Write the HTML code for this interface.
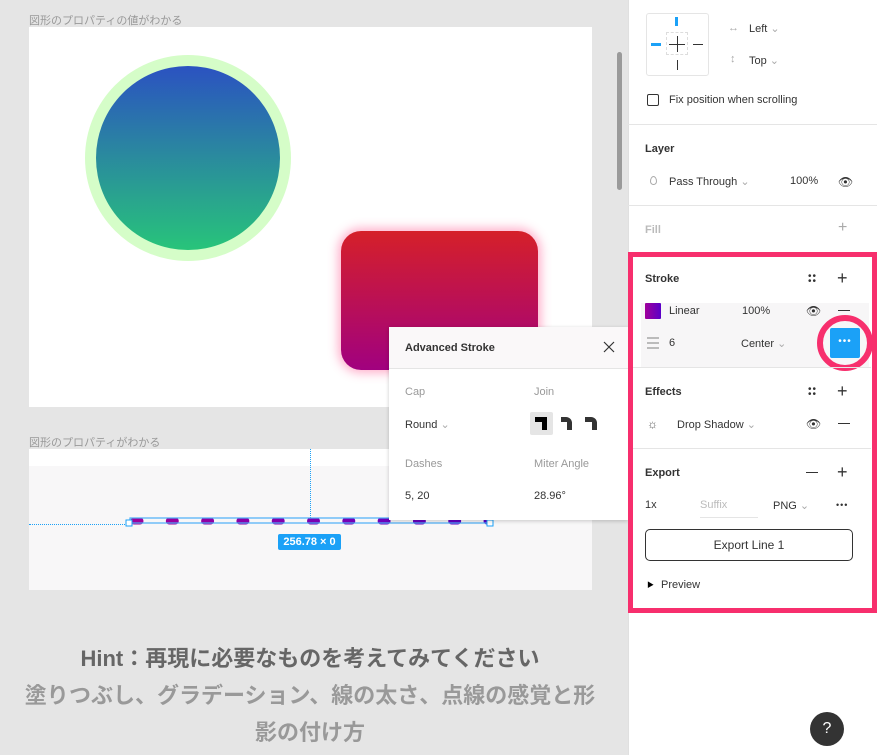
<!DOCTYPE html>
<html><head><meta charset="utf-8"><style>
*{margin:0;padding:0;box-sizing:border-box}
body{width:877px;height:755px;background:#e5e5e5;position:relative;overflow:hidden;font-family:"Liberation Sans","Noto Sans CJK JP",sans-serif;}
.a{position:absolute}
.lbl{font-size:11px;color:#999}
.t{font-size:11px;color:#333}
.h{font-size:11px;font-weight:bold;color:#333}
.sep{position:absolute;left:628px;width:249px;height:1px;background:#e5e5e5}
</style></head><body>
<div class="a lbl" style="left:29px;top:12px">図形のプロパティの値がわかる</div>
<div class="a" style="left:29px;top:27px;width:563px;height:380px;background:#fff"></div>
<div class="a" style="left:85px;top:55px;width:206px;height:206px;border-radius:50%;background:#d5fdc8"></div>
<div class="a" style="left:96px;top:66px;width:184px;height:184px;border-radius:50%;background:linear-gradient(#2b52c1,#28c47a)"></div>
<div class="a" style="left:341px;top:231px;width:197px;height:139px;border-radius:20px;background:linear-gradient(#d52029,#a1017f);box-shadow:0 0 10px 3px rgba(255,80,140,.45)"></div>
<div class="a" style="left:617px;top:52px;width:5px;height:138px;border-radius:3px;background:#9a9a9a"></div>

<div class="a lbl" style="left:29px;top:434px">図形のプロパティがわかる</div>
<div class="a" style="left:29px;top:449px;width:563px;height:141px;background:#f8f7f8"></div>
<div class="a" style="left:29px;top:449px;width:563px;height:17px;background:#fff"></div>
<div class="a" style="left:29px;top:524px;width:100px;border-top:1px dotted #1ba1f7"></div>
<div class="a" style="left:310px;top:449px;height:75px;border-left:1px dotted #1ba1f7"></div>
<svg class="a" style="left:125px;top:512px" width="372" height="24">
<defs><linearGradient id="g" gradientUnits="userSpaceOnUse" x1="5" y1="0" x2="365" y2="0"><stop offset="0" stop-color="#a0009a"/><stop offset="1" stop-color="#5a00c8"/></linearGradient>
<filter id="sh"><feGaussianBlur stdDeviation="2"/></filter></defs>
<line x1="9" y1="15" x2="365" y2="15" stroke="#999" opacity=".5" filter="url(#sh)" stroke-width="6" stroke-linecap="round" stroke-dasharray="6 29.3"/>
<line x1="9" y1="9" x2="365" y2="9" stroke="url(#g)" stroke-width="7" stroke-linecap="round" stroke-dasharray="6 29.3"/>
<rect x="5" y="6" width="360" height="5" fill="none" stroke="#4aaef7" stroke-width="1.2"/>
<rect x="1" y="8" width="6" height="6" fill="#fff" stroke="#1ba1f7"/>
<rect x="362" y="8" width="6" height="6" fill="#fff" stroke="#1ba1f7"/>
</svg>
<div class="a" style="left:278px;top:534px;width:63px;height:16px;background:#1ba1f7;border-radius:2px;color:#fff;font-size:11px;font-weight:bold;text-align:center;line-height:16px">256.78 × 0</div>

<div class="a" style="left:389px;top:327px;width:239px;height:193px;background:#fff;box-shadow:0 1px 4px rgba(0,0,0,.2)">
<div style="height:42px;background:#faf8f9;border-bottom:1px solid #e5e5e5;position:relative">
<div class="a h" style="left:16px;top:15px">Advanced Stroke</div>
<svg class="a" style="left:214px;top:14px" width="12" height="12"><path d="M1 1L11 11M11 1L1 11" stroke="#333" stroke-width="1.2"/></svg>
</div>
<div class="a lbl" style="left:16px;top:59px">Cap</div>
<div class="a lbl" style="left:145px;top:59px">Join</div>
<div class="a t" style="left:16px;top:91px">Round <span style="color:#aaa">⌄</span></div>
<div class="a" style="left:141px;top:85px;width:23px;height:23px;background:#e5e5e5;border-radius:2px"></div>
<svg class="a" style="left:146px;top:90px" width="70" height="14">
<path d="M0 0H12V13H7V5H0Z" fill="#000"/>
<path d="M26 0H31A6 6 0 0 1 37 6V13H32V5H26Z" fill="#333"/>
<path d="M50 0H56A6 6 0 0 1 62 6V13H57V5H50Z" fill="#333"/>
</svg>
<div class="a lbl" style="left:16px;top:131px">Dashes</div>
<div class="a lbl" style="left:145px;top:131px">Miter Angle</div>
<div class="a t" style="left:16px;top:163px">5, 20</div>
<div class="a t" style="left:145px;top:163px">28.96°</div>
</div>

<div class="a" style="left:0;top:640px;width:620px;text-align:center;font-weight:bold;font-size:22px;color:#666;line-height:37px">Hint：再現に必要なものを考えてみてください<br><span style="color:#999">塗りつぶし、グラデーション、線の太さ、点線の感覚と形<br>影の付け方</span></div>

<div class="a" style="left:628px;top:0;width:249px;height:755px;background:#fff;border-left:1px solid #e0e0e0"></div>
<div class="a" style="left:646px;top:13px;width:63px;height:63px;border:1px solid #e5e5e5;border-radius:3px"></div>
<div class="a" style="left:675px;top:17px;width:3px;height:9px;background:#1ba1f7"></div>
<div class="a" style="left:651px;top:43px;width:10px;height:3px;background:#1ba1f7"></div>
<div class="a" style="left:666px;top:32px;width:22px;height:23px;border:1px dashed #ddd"></div>
<div class="a" style="left:669px;top:44px;width:16px;height:1px;background:#333"></div>
<div class="a" style="left:677px;top:36px;width:1px;height:16px;background:#333"></div>
<div class="a" style="left:693px;top:44px;width:10px;height:1px;background:#333"></div>
<div class="a" style="left:677px;top:60px;width:1px;height:10px;background:#333"></div>
<div class="a" style="left:728px;top:22px;font-size:11px;color:#aaa">↔</div>
<div class="a t" style="left:749px;top:22px">Left <span style="color:#aaa">⌄</span></div>
<div class="a" style="left:730px;top:53px;font-size:11px;color:#aaa">↕</div>
<div class="a t" style="left:749px;top:54px">Top <span style="color:#aaa">⌄</span></div>
<div class="a" style="left:647px;top:94px;width:12px;height:12px;border:1px solid #333;border-radius:2px"></div>
<div class="a t" style="left:669px;top:94px">Fix position when scrolling</div>
<div class="sep" style="top:124px"></div>
<div class="a h" style="left:645px;top:143px">Layer</div>
<div class="a" style="left:650px;top:176px;width:7px;height:9px;border:1px solid #aaa;border-radius:50% 50% 50% 50%/60% 60% 40% 40%"></div>
<div class="a t" style="left:669px;top:175px">Pass Through <span style="color:#aaa">⌄</span></div>
<div class="a t" style="left:790px;top:175px">100%</div>
<div class="a" style="left:838px;top:175px;font-size:12px;color:#333">👁</div>
<div class="sep" style="top:205px"></div>
<div class="a h" style="left:645px;top:224px;color:#bbb">Fill</div>
<div class="a" style="left:838px;top:219px;font-size:16px;color:#aaa">+</div>

<div class="a" style="left:641px;top:303px;width:228px;height:64px;background:#f7f6f7"></div>
<div class="a" style="left:628px;top:252px;width:249px;height:361px;border:5px solid #f72f6d"></div>
<div class="a h" style="left:645px;top:273px">Stroke</div>
<div class="a" style="left:808px;top:274px;font-size:10px;line-height:5px;color:#333;letter-spacing:1px">••<br>••</div>
<div class="a" style="left:837px;top:268px;font-size:18px;color:#333">+</div>
<div class="a" style="left:645px;top:303px;width:16px;height:16px;background:linear-gradient(90deg,#a0009a,#5a00c8);border-radius:1px"></div>
<div class="a t" style="left:669px;top:305px">Linear</div>
<div class="a t" style="left:742px;top:305px">100%</div>
<div class="a" style="left:806px;top:304px;font-size:12px;color:#333">👁</div>
<div class="a" style="left:838px;top:310px;width:12px;height:1px;background:#333"></div>
<div class="a" style="left:647px;top:337px;width:12px;height:12px;border-top:2px solid #bbb;border-bottom:2px solid #bbb"></div>
<div class="a" style="left:647px;top:342px;width:12px;height:2px;background:#bbb"></div>
<div class="a t" style="left:669px;top:337px">6</div>
<div class="a t" style="left:741px;top:337px">Center <span style="color:#aaa">⌄</span></div>
<div class="a" style="left:817px;top:315px;width:56px;height:56px;border-radius:50%;border:6px solid #f72f6d"></div>
<div class="a" style="left:830px;top:328px;width:30px;height:30px;background:#1ba1f7;border-radius:2px;color:#fff;text-align:center;font-size:10px;line-height:28px;letter-spacing:1px">•••</div>
<div class="sep" style="top:367px;left:633px;width:238px"></div>
<div class="a h" style="left:645px;top:386px">Effects</div>
<div class="a" style="left:808px;top:387px;font-size:10px;line-height:5px;color:#333;letter-spacing:1px">••<br>••</div>
<div class="a" style="left:837px;top:381px;font-size:18px;color:#333">+</div>
<div class="a" style="left:647px;top:417px;font-size:12px;color:#555">☼</div>
<div class="a t" style="left:677px;top:418px">Drop Shadow <span style="color:#aaa">⌄</span></div>
<div class="a" style="left:806px;top:417px;font-size:12px;color:#333">👁</div>
<div class="a" style="left:838px;top:423px;width:12px;height:1px;background:#333"></div>
<div class="sep" style="top:448px;left:633px;width:238px"></div>
<div class="a h" style="left:645px;top:467px">Export</div>
<div class="a" style="left:806px;top:472px;width:12px;height:1px;background:#333"></div>
<div class="a" style="left:837px;top:462px;font-size:18px;color:#333">+</div>
<div class="a t" style="left:645px;top:499px">1x</div>
<div class="a" style="left:700px;top:499px;font-size:11px;color:#bbb;width:58px;height:19px;border-bottom:1px solid #e5e5e5">Suffix</div>
<div class="a t" style="left:773px;top:499px">PNG <span style="color:#aaa">⌄</span></div>
<div class="a" style="left:836px;top:500px;font-size:9px;color:#333;letter-spacing:1px">•••</div>
<div class="a t" style="left:645px;top:529px;width:208px;height:32px;border:1px solid #333;border-radius:5px;text-align:center;line-height:30px;font-size:12px">Export Line 1</div>
<div class="a" style="left:647px;top:580px;font-size:7px;color:#000">▶</div>
<div class="a t" style="left:661px;top:579px">Preview</div>
<div class="a" style="left:810px;top:712px;width:34px;height:34px;border-radius:50%;background:#333;color:#fff;text-align:center;line-height:34px;font-size:16px">?</div>
</body></html>
